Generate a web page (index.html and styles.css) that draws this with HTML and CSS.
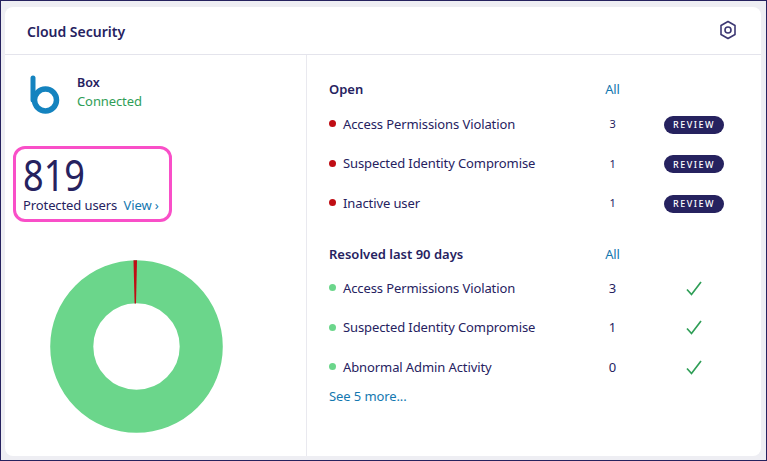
FILE: index.html
```html
<!DOCTYPE html>
<html>

<head>
    <title>Cloud Security</title>
    <link rel="stylesheet" href="styles.css">
</head>

<body>
    <div class="frame">
        <div class="card">
            <div class="card-header">
                <h2>Cloud Security</h2>
                <svg class="settings-icon" width="18" height="20" viewBox="0 0 18 20">
                    <path d="M9 1.5 16 5.5V14.5L9 18.5 2 14.5V5.5Z" fill="none" stroke="#3d3873" stroke-width="1.6" stroke-linejoin="round" />
                    <circle cx="9" cy="10" r="3" fill="none" stroke="#3d3873" stroke-width="1.6" />
                </svg>
            </div>

            <div class="card-body">
                <div class="left-col">
                    <div class="app-row">
                        <svg class="app-logo" width="32" height="40" viewBox="0 0 32 40">
                            <path d="M3 3V25" fill="none" stroke="#1483bf" stroke-width="5" stroke-linecap="round" />
                            <circle cx="15.5" cy="25" r="11" fill="none" stroke="#1483bf" stroke-width="5.5" />
                        </svg>
                        <div>
                            <div class="app-name">Box</div>
                            <div class="app-status">Connected</div>
                        </div>
                    </div>

                    <div class="users-box">
                        <div class="users-count">819</div>
                        <div class="users-label">Protected users <a class="link view-link">View ›</a></div>
                    </div>

                    <svg class="donut" width="173" height="173" viewBox="0 0 173 173">
                        <circle cx="86.5" cy="86.5" r="64.75" fill="none" stroke="#6bd68b" stroke-width="43.1" />
                        <path d="M83.5 0.3H87L86 43.5H84.6Z" fill="#c00d14" />
                    </svg>
                </div>

                <div class="right-col">
                    <div class="issue-grid head-row open-head">
                        <span class="section-title">Open</span>
                        <a class="link count">All</a>
                    </div>
                    <div class="issue-grid issue-row">
                        <span class="issue-name"><i class="dot red"></i>Access Permissions Violation</span>
                        <span class="count small">3</span>
                        <span class="action"><button class="review-btn">REVIEW</button></span>
                    </div>
                    <div class="issue-grid issue-row">
                        <span class="issue-name"><i class="dot red"></i>Suspected Identity Compromise</span>
                        <span class="count small">1</span>
                        <span class="action"><button class="review-btn">REVIEW</button></span>
                    </div>
                    <div class="issue-grid issue-row">
                        <span class="issue-name"><i class="dot red"></i>Inactive user</span>
                        <span class="count small">1</span>
                        <span class="action"><button class="review-btn">REVIEW</button></span>
                    </div>

                    <div class="issue-grid head-row resolved-head">
                        <span class="section-title">Resolved last 90 days</span>
                        <a class="link count">All</a>
                    </div>
                    <div class="issue-grid issue-row">
                        <span class="issue-name"><i class="dot green"></i>Access Permissions Violation</span>
                        <span class="count">3</span>
                        <span class="action">
                            <svg class="check" width="16" height="15" viewBox="0 0 16 15"><path d="M1 8.5 5.5 13.5 15 1" fill="none" stroke="#2f9e57" stroke-width="1.7" /></svg>
                        </span>
                    </div>
                    <div class="issue-grid issue-row">
                        <span class="issue-name"><i class="dot green"></i>Suspected Identity Compromise</span>
                        <span class="count">1</span>
                        <span class="action">
                            <svg class="check" width="16" height="15" viewBox="0 0 16 15"><path d="M1 8.5 5.5 13.5 15 1" fill="none" stroke="#2f9e57" stroke-width="1.7" /></svg>
                        </span>
                    </div>
                    <div class="issue-grid issue-row">
                        <span class="issue-name"><i class="dot green"></i>Abnormal Admin Activity</span>
                        <span class="count">0</span>
                        <span class="action">
                            <svg class="check" width="16" height="15" viewBox="0 0 16 15"><path d="M1 8.5 5.5 13.5 15 1" fill="none" stroke="#2f9e57" stroke-width="1.7" /></svg>
                        </span>
                    </div>
                    <a class="link see-more">See 5 more...</a>
                </div>
            </div>
        </div>
    </div>
</body>

</html>
```

FILE: styles.css
```css
* {
    box-sizing: border-box;
}

body {
    margin: 0;
    font-family: 'Noto Sans', sans-serif;
    font-size: 13px;
    letter-spacing: -0.1px;
    color: #26225f;
}

.frame {
    width: 767px;
    height: 461px;
    padding: 6px 5px 4px 4px;
    background: #eeeef3;
    border: 1px solid #26225f;
}

.card {
    height: 100%;
    background: #fff;
    border-radius: 8px;
    display: flex;
    flex-direction: column;
}

.card-header {
    height: 48px;
    padding: 1px 24px 0 22px;
    border-bottom: 1px solid #e4e4ec;
    display: flex;
    align-items: center;
    justify-content: space-between;
}

.card-header h2 {
    margin: 0;
    font-size: 14px;
    font-weight: 600;
    letter-spacing: 0;
}

.settings-icon {
    margin-top: -2px;
}

.card-body {
    flex: 1;
    display: flex;
}

.left-col {
    width: 302px;
    border-right: 1px solid #e9e9ef;
    padding-top: 20px;
}

.app-row {
    display: flex;
    gap: 15px;
    padding-left: 25px;
    height: 71px;
}

.app-name {
    font-weight: 600;
    font-size: 12.5px;
    line-height: 16px;
    letter-spacing: 0;
}

.app-status {
    color: #2f9e57;
    line-height: 21px;
}

.users-box {
    width: 159.5px;
    height: 76px;
    margin-left: 7.5px;
    padding: 2.5px 0 0 7.5px;
    border: 3px solid #f94fc8;
    border-radius: 12px;
}

.users-count {
    font-size: 43px;
    line-height: 45px;
    letter-spacing: 0;
    transform: scaleX(0.84);
    transform-origin: left center;
}

.users-label {
    line-height: 17px;
    white-space: nowrap;
}

.view-link {
    margin-left: 3px;
}

.link {
    color: #1478b0;
}

.donut {
    display: block;
    margin: 38px 0 0 45px;
}

.right-col {
    flex: 1;
    padding: 22px 0 0 22px;
}

.issue-grid {
    display: grid;
    grid-template-columns: 263px 41px 122px;
    align-items: center;
}

.head-row {
    height: 24px;
}

.open-head {
    margin-bottom: 3px;
}

.resolved-head {
    margin-top: 19.5px;
    margin-bottom: 2px;
}

.issue-row {
    height: 39.5px;
}

.section-title {
    font-size: 13px;
    font-weight: 600;
    letter-spacing: 0;
}

.issue-name {
    display: flex;
    align-items: center;
    white-space: nowrap;
}

.dot {
    width: 7px;
    height: 7px;
    margin-right: 7px;
    border-radius: 50%;
}

.dot.red {
    background: #c00d14;
}

.dot.green {
    background: #6bd68b;
}

.count {
    text-align: center;
}

.count.small {
    font-size: 11px;
}

.action {
    display: flex;
    justify-content: center;
}

.review-btn {
    width: 60px;
    height: 18px;
    margin-top: 2px;
    padding: 0;
    border: none;
    border-radius: 9px;
    background: #26225f;
    color: #fff;
    font-family: 'Noto Sans', sans-serif;
    font-size: 9px;
    font-weight: 500;
    letter-spacing: 1.5px;
}

.check {
    margin-top: 1px;
}

.see-more {
    display: block;
}
```
